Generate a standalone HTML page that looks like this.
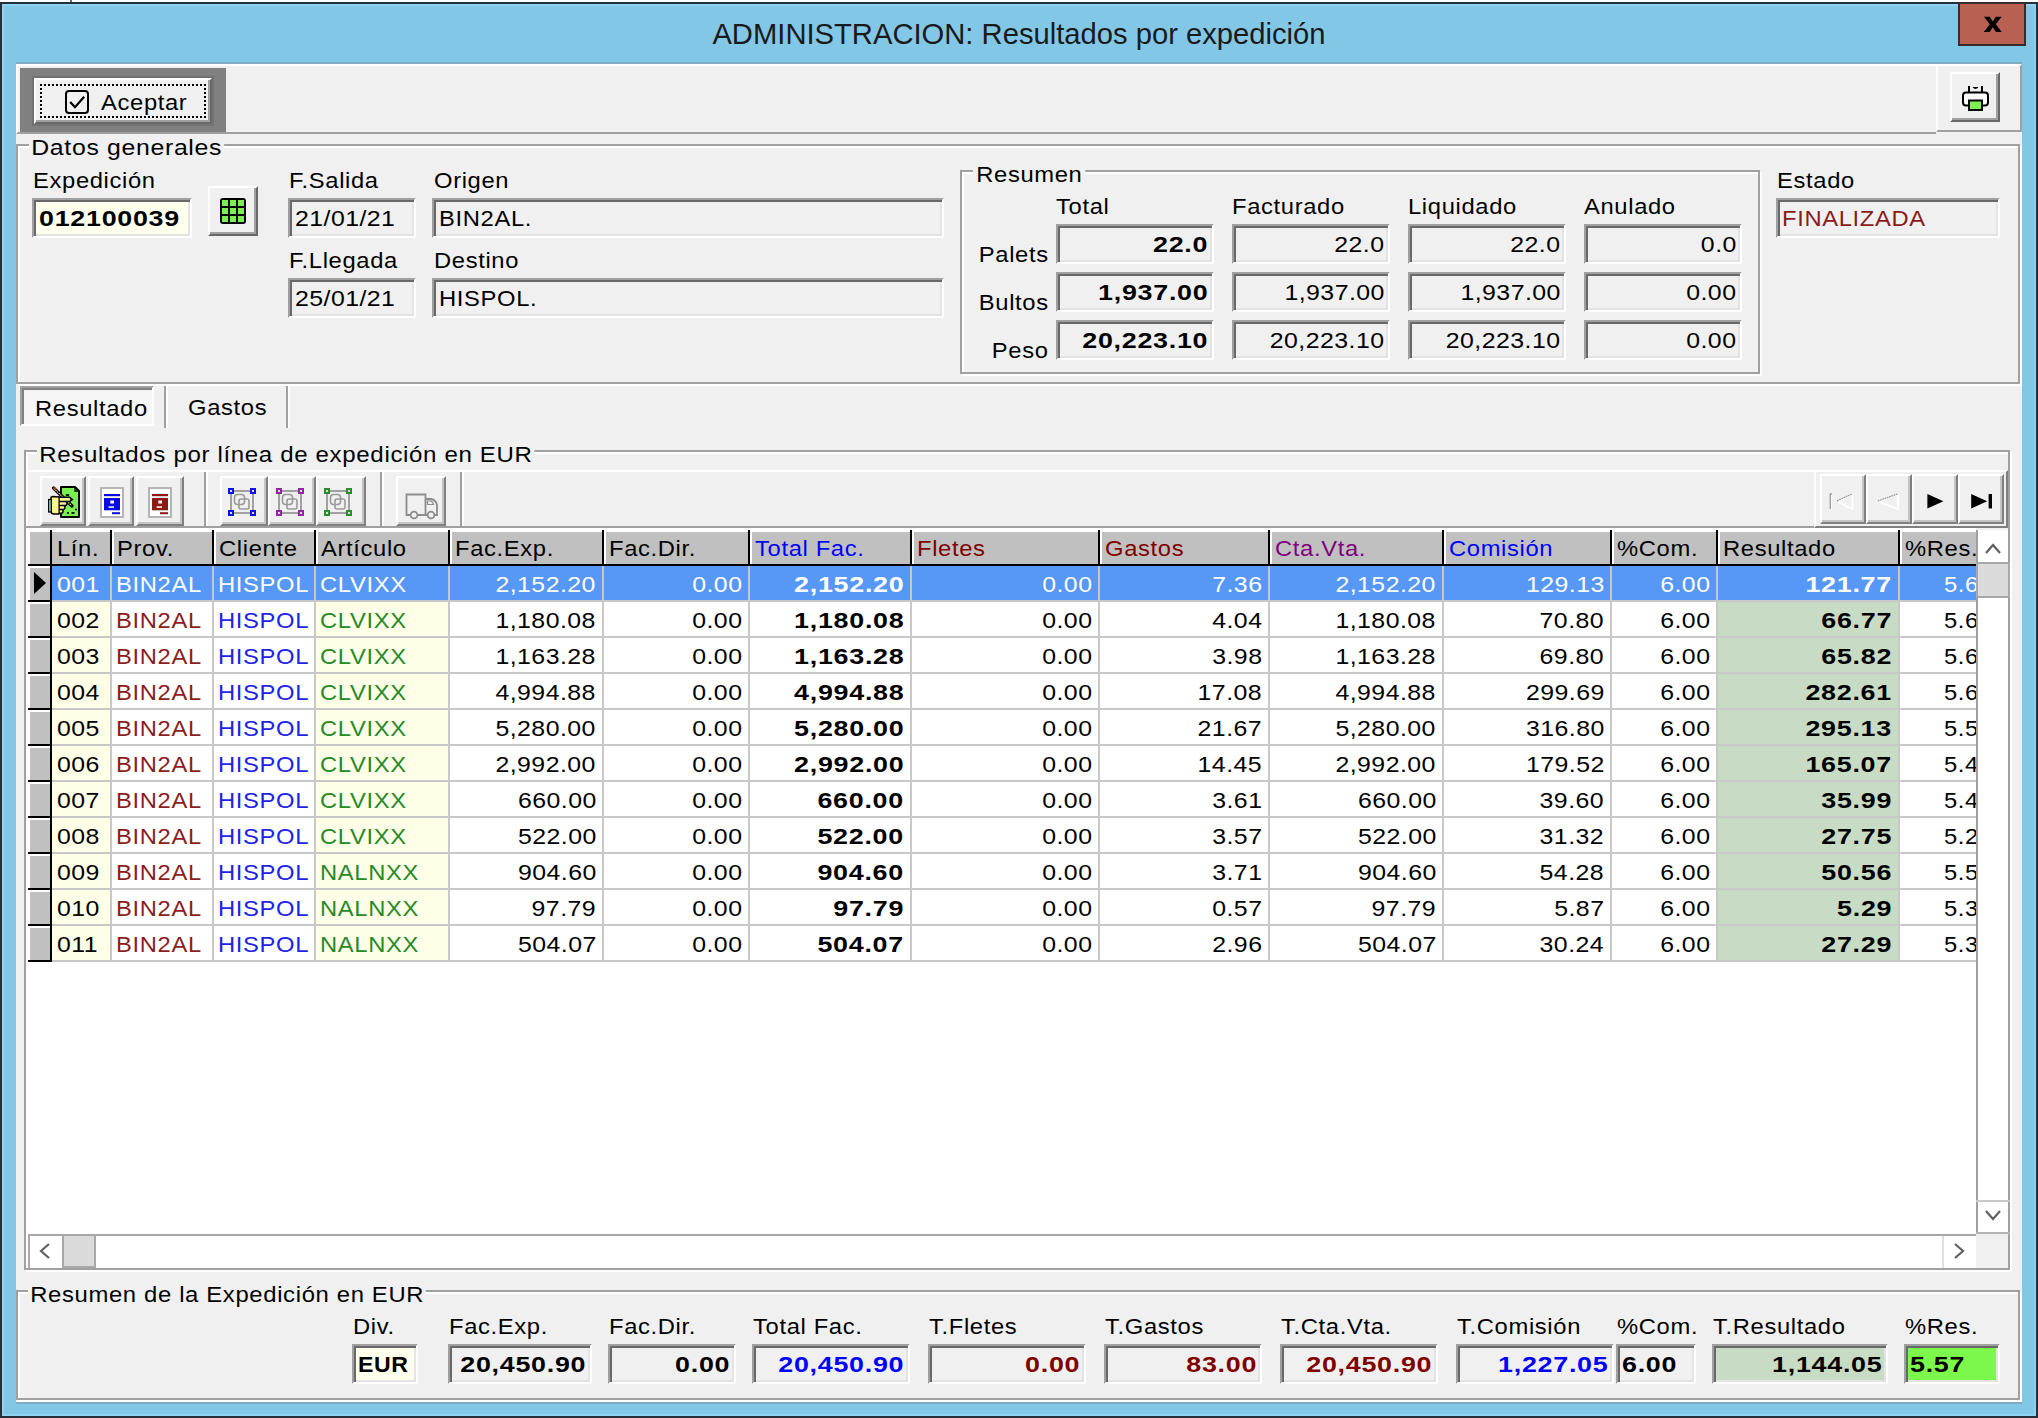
<!DOCTYPE html><html><head><meta charset="utf-8"><style>
*{margin:0;padding:0;box-sizing:content-box}
html{zoom:2}
body{width:1019px;height:709px;position:relative;overflow:hidden;background:#fff}
body div{position:absolute}
.t{font-family:"Liberation Sans",sans-serif;font-size:11px;line-height:12px;letter-spacing:0.3px;white-space:nowrap;color:#000;transform:scaleX(1.08);transform-origin:0 0}
.b{font-family:"Liberation Sans",sans-serif;font-size:11px;line-height:12px;letter-spacing:0.3px;font-weight:bold;white-space:nowrap;color:#000;transform:scaleX(1.22);transform-origin:0 0}
.r{transform-origin:100% 0}
.sk{border-style:solid;border-width:1px;border-color:#A0A0A0 #FFFFFF #FFFFFF #A0A0A0;box-shadow:inset 1px 1px 0 #696969, inset -1px -1px 0 #E3E3E3}
.rs{border-style:solid;border-width:1px;border-color:#FFFFFF #696969 #696969 #FFFFFF;box-shadow:inset -1px -1px 0 #A0A0A0}
</style></head><body>
<div style="left:0px;top:1px;width:1019px;height:708px;background:#26303a"></div>
<div style="left:1px;top:2px;width:1017px;height:706px;background:#83C7E7;border:1px solid #8FD3F0;box-sizing:border-box"></div>
<div style="left:35px;top:0px;width:1px;height:1px;background:#666"></div>
<div style="left:0;top:8.4px;width:1019px;text-align:center;font-family:'Liberation Sans',sans-serif;font-size:14.6px;line-height:17px;color:#1a1a1a;white-space:nowrap">ADMINISTRACION: Resultados por expedición</div>
<div style="left:979px;top:1px;width:34px;height:22px;background:#B86052;border:1px solid #3a2b2a;box-sizing:border-box"></div>
<svg style="position:absolute;left:979px;top:1px" width="34" height="22" viewBox="0 0 34 22"><path d="M13 7.4 L15.9 7.4 L17.4 9.7 L18.9 7.4 L21.8 7.4 L18.9 11.1 L21.9 15 L19 15 L17.4 12.6 L15.8 15 L12.9 15 L15.9 11.1 Z" fill="#000"/></svg>
<div style="left:8px;top:31px;width:1003px;height:1px;background:#80A9C6"></div>
<div style="left:8px;top:701px;width:1003px;height:1px;background:#80A9C6"></div>
<div style="left:8px;top:32px;width:1003px;height:669px;background:#F0F0F0"></div>
<div style="left:8px;top:32px;width:960px;height:35px;border-top:1px solid #fff;border-left:1px solid #fff;border-bottom:1px solid #A0A0A0;box-sizing:border-box"></div>
<div style="left:968px;top:32px;width:43px;height:34px;border-top:1px solid #fff;border-left:1px solid #fff;border-right:1px solid #A0A0A0;border-bottom:1px solid #A0A0A0;box-sizing:border-box"></div>
<div style="left:10px;top:34px;width:103px;height:32px;background:#808080"></div>
<div style="left:16px;top:38px;width:91px;height:25px;background:#727272"></div>
<div class="rs" style="left:17px;top:39px;width:87px;height:21px;background:#F0F0F0"></div>
<div style="left:20px;top:42px;width:83px;height:17px;border:1px dotted #000;box-sizing:border-box"></div>
<div style="left:32.5px;top:45px;width:12px;height:12px;border:1px solid #000;border-radius:2px;box-sizing:border-box"></div>
<svg style="position:absolute;left:32.5px;top:45px" width="12" height="12" viewBox="0 0 12 12"><path d="M2.6 6 L5 8.6 L9.6 3.4" fill="none" stroke="#000" stroke-width="1.1"/></svg>
<div class="t" style="left:50.5px;top:45.60px;">Aceptar</div>
<div class="rs" style="left:975px;top:36px;width:23px;height:23px;background:#F0F0F0"></div>
<svg style="position:absolute;left:975px;top:36px" width="25" height="25" viewBox="0 0 50 50"><path d="M19 14 v7 M32 14 v7" stroke="#000" stroke-width="2"/>
<path d="M22.5 15 Q25.5 19 28.5 15 z" fill="#000"/>
<rect x="13" y="20.5" width="25" height="13" rx="3" fill="#fff" stroke="#000" stroke-width="2"/>
<rect x="19" y="28.5" width="13" height="9.5" fill="#7CF050" stroke="#000" stroke-width="2"/></svg>
<div style="left:9px;top:73px;width:1000px;height:118px;border:1px solid #fff"></div>
<div style="left:8px;top:72px;width:1000px;height:118px;border:1px solid #A0A0A0"></div>
<div class="t" style="left:14.5px;top:68.20px;background:#F0F0F0;padding:0 1px;transform:scaleX(1.128)">Datos generales</div>
<div class="t" style="left:16.5px;top:84.60px;">Expedición</div>
<div class="sk" style="left:16px;top:99px;width:78px;height:18px;background:#FFFFEE"></div>
<div class="b" style="left:19.5px;top:103.60px;">012100039</div>
<div class="rs" style="left:104px;top:93px;width:23px;height:23px;background:#F0F0F0"></div>
<svg style="position:absolute;left:104px;top:93px" width="25" height="25" viewBox="0 0 50 50"><rect x="12" y="12" width="26" height="26" rx="3" fill="#000"/><g fill="#77F050"><rect x="14" y="14" width="6" height="6"/><rect x="14" y="22" width="6" height="6"/><rect x="14" y="30" width="6" height="6"/><rect x="22" y="14" width="6" height="6"/><rect x="22" y="22" width="6" height="6"/><rect x="22" y="30" width="6" height="6"/><rect x="30" y="14" width="6" height="6"/><rect x="30" y="22" width="6" height="6"/><rect x="30" y="30" width="6" height="6"/></g></svg>
<div class="t" style="left:144.3px;top:84.60px;">F.Salida</div>
<div class="sk" style="left:144px;top:99px;width:62px;height:18px;background:#F0F0F0"></div>
<div class="t" style="left:147.5px;top:103.60px;;transform:scaleX(1.13);letter-spacing:0.2px">21/01/21</div>
<div class="t" style="left:216.8px;top:84.60px;">Origen</div>
<div class="sk" style="left:216px;top:99px;width:254px;height:18px;background:#F0F0F0"></div>
<div class="t" style="left:219.5px;top:103.60px;">BIN2AL.</div>
<div class="t" style="left:144.3px;top:124.60px;">F.Llegada</div>
<div class="sk" style="left:144px;top:139px;width:62px;height:18px;background:#F0F0F0"></div>
<div class="t" style="left:147.5px;top:143.60px;;transform:scaleX(1.13);letter-spacing:0.2px">25/01/21</div>
<div class="t" style="left:216.8px;top:124.60px;">Destino</div>
<div class="sk" style="left:216px;top:139px;width:254px;height:18px;background:#F0F0F0"></div>
<div class="t" style="left:219.5px;top:143.60px;">HISPOL.</div>
<div style="left:480px;top:85px;width:398px;height:100px;border:1px solid #A0A0A0;box-shadow:1px 1px 0 #fff, inset 1px 1px 0 #fff"></div>
<div class="t" style="left:486.6px;top:81.40px;background:#F0F0F0;padding:0 1.5px">Resumen</div>
<div class="t" style="left:528.2px;top:97.60px;">Total</div>
<div class="t" style="left:616.2px;top:97.60px;">Facturado</div>
<div class="t" style="left:704.2px;top:97.60px;">Liquidado</div>
<div class="t" style="left:792.2px;top:97.60px;">Anulado</div>
<div class="t r" style="right:494.70px;top:121.40px;">Palets</div>
<div class="sk" style="left:528px;top:112px;width:77px;height:18px;background:#F0F0F0"></div>
<div class="b r" style="right:414.70px;top:116.60px;">22.0</div>
<div class="sk" style="left:616px;top:112px;width:77px;height:18px;background:#F0F0F0"></div>
<div class="t r" style="right:326.70px;top:116.60px;;transform:scaleX(1.13);letter-spacing:0.2px">22.0</div>
<div class="sk" style="left:704px;top:112px;width:77px;height:18px;background:#F0F0F0"></div>
<div class="t r" style="right:238.70px;top:116.60px;;transform:scaleX(1.13);letter-spacing:0.2px">22.0</div>
<div class="sk" style="left:792px;top:112px;width:77px;height:18px;background:#F0F0F0"></div>
<div class="t r" style="right:150.70px;top:116.60px;;transform:scaleX(1.13);letter-spacing:0.2px">0.0</div>
<div class="t r" style="right:494.70px;top:145.40px;">Bultos</div>
<div class="sk" style="left:528px;top:136px;width:77px;height:18px;background:#F0F0F0"></div>
<div class="b r" style="right:414.70px;top:140.60px;">1,937.00</div>
<div class="sk" style="left:616px;top:136px;width:77px;height:18px;background:#F0F0F0"></div>
<div class="t r" style="right:326.70px;top:140.60px;;transform:scaleX(1.13);letter-spacing:0.2px">1,937.00</div>
<div class="sk" style="left:704px;top:136px;width:77px;height:18px;background:#F0F0F0"></div>
<div class="t r" style="right:238.70px;top:140.60px;;transform:scaleX(1.13);letter-spacing:0.2px">1,937.00</div>
<div class="sk" style="left:792px;top:136px;width:77px;height:18px;background:#F0F0F0"></div>
<div class="t r" style="right:150.70px;top:140.60px;;transform:scaleX(1.13);letter-spacing:0.2px">0.00</div>
<div class="t r" style="right:494.70px;top:169.40px;">Peso</div>
<div class="sk" style="left:528px;top:160px;width:77px;height:18px;background:#F0F0F0"></div>
<div class="b r" style="right:414.70px;top:164.60px;">20,223.10</div>
<div class="sk" style="left:616px;top:160px;width:77px;height:18px;background:#F0F0F0"></div>
<div class="t r" style="right:326.70px;top:164.60px;;transform:scaleX(1.13);letter-spacing:0.2px">20,223.10</div>
<div class="sk" style="left:704px;top:160px;width:77px;height:18px;background:#F0F0F0"></div>
<div class="t r" style="right:238.70px;top:164.60px;;transform:scaleX(1.13);letter-spacing:0.2px">20,223.10</div>
<div class="sk" style="left:792px;top:160px;width:77px;height:18px;background:#F0F0F0"></div>
<div class="t r" style="right:150.70px;top:164.60px;;transform:scaleX(1.13);letter-spacing:0.2px">0.00</div>
<div class="t" style="left:888.3px;top:84.60px;">Estado</div>
<div class="sk" style="left:888px;top:99px;width:110px;height:18px;background:#F0F0F0"></div>
<div class="t" style="left:891px;top:103.60px;color:#8B1A1A">FINALIZADA</div>
<div style="left:10px;top:193px;width:67px;height:20px;border-style:solid;border-width:1px;border-color:#A0A0A0 #fff #fff #A0A0A0;box-shadow:inset 1px 1px 0 #808080;box-sizing:border-box;background:#F6F6F6"></div>
<div class="t" style="left:17.6px;top:198.40px;">Resultado</div>
<div style="left:82px;top:193px;width:1px;height:21px;background:#A0A0A0"></div>
<div style="left:83px;top:193px;width:1px;height:21px;background:#fff"></div>
<div class="t" style="left:94.2px;top:197.80px;">Gastos</div>
<div style="left:143px;top:193px;width:1px;height:21px;background:#A0A0A0"></div>
<div style="left:144px;top:193px;width:1px;height:21px;background:#fff"></div>
<div style="left:13px;top:226px;width:991px;height:408px;border:1px solid #fff"></div>
<div style="left:12px;top:225px;width:991px;height:408px;border:1px solid #A0A0A0"></div>
<div class="t" style="left:18.3px;top:221.40px;background:#F0F0F0;padding:0 1px;transform:scaleX(1.093)">Resultados por línea de expedición en EUR</div>
<div style="left:13px;top:235px;width:975px;height:29px;border-top:1px solid #fff;border-bottom:1px solid #A0A0A0;box-sizing:border-box"></div>
<div style="left:20px;top:238px;width:23px;height:25px;border-style:solid;border-width:1px;border-color:#fff #808080 #808080 #fff;box-sizing:border-box;box-shadow:inset -1px -1px 0 #C4C4C4"></div>
<div style="left:44px;top:238px;width:23px;height:25px;border-style:solid;border-width:1px;border-color:#fff #808080 #808080 #fff;box-sizing:border-box;box-shadow:inset -1px -1px 0 #C4C4C4"></div>
<div style="left:68px;top:238px;width:24px;height:25px;border-style:solid;border-width:1px;border-color:#fff #808080 #808080 #fff;box-sizing:border-box;box-shadow:inset -1px -1px 0 #C4C4C4"></div>
<div style="left:110px;top:238px;width:24px;height:25px;border-style:solid;border-width:1px;border-color:#fff #808080 #808080 #fff;box-sizing:border-box;box-shadow:inset -1px -1px 0 #C4C4C4"></div>
<div style="left:134px;top:238px;width:24px;height:25px;border-style:solid;border-width:1px;border-color:#fff #808080 #808080 #fff;box-sizing:border-box;box-shadow:inset -1px -1px 0 #C4C4C4"></div>
<div style="left:158px;top:238px;width:25px;height:25px;border-style:solid;border-width:1px;border-color:#fff #808080 #808080 #fff;box-sizing:border-box;box-shadow:inset -1px -1px 0 #C4C4C4"></div>
<div style="left:198px;top:238px;width:25px;height:25px;border-style:solid;border-width:1px;border-color:#fff #808080 #808080 #fff;box-sizing:border-box;box-shadow:inset -1px -1px 0 #C4C4C4"></div>
<div style="left:102px;top:236px;width:1px;height:27px;background:#A0A0A0"></div>
<div style="left:103px;top:236px;width:1px;height:27px;background:#fff"></div>
<div style="left:190px;top:236px;width:1px;height:27px;background:#A0A0A0"></div>
<div style="left:191px;top:236px;width:1px;height:27px;background:#fff"></div>
<div style="left:230px;top:236px;width:1px;height:27px;background:#A0A0A0"></div>
<div style="left:231px;top:236px;width:1px;height:27px;background:#fff"></div>
<svg style="position:absolute;left:24px;top:243px" width="16" height="16" viewBox="0 0 32 32">
<path d="M13 1 H27 L31 5 V31 H13 Z" fill="#77F050" stroke="#000" stroke-width="2" stroke-linejoin="round"/>
<path d="M27 1.5 V5 H30.5" fill="none" stroke="#000" stroke-width="1.3"/>
<g fill="#000"><ellipse cx="19.5" cy="9" rx="2" ry="1"/><ellipse cx="23.5" cy="13.5" rx="2" ry="1"/><ellipse cx="28" cy="23.5" rx="1" ry="1"/><ellipse cx="20" cy="27" rx="1.1" ry="1"/><ellipse cx="25" cy="27" rx="1.8" ry="1"/></g>
<path d="M5.5 2 L24 20" stroke="#000" stroke-width="3.2" stroke-linecap="round"/>
<path d="M6 2.5 L23.5 19.5" stroke="#F8E860" stroke-width="1.2" stroke-dasharray="1.4 0.8"/>
<circle cx="6.5" cy="2.6" r="1.5" fill="#C83020"/>
<g fill="#FFF490" stroke="#000" stroke-width="1.5" stroke-linejoin="round">
<rect x="9" y="23" width="6" height="4.2" rx="2"/>
<rect x="9" y="19.2" width="8" height="4.2" rx="2"/>
<rect x="9" y="15.2" width="10" height="4.2" rx="2"/>
<rect x="9" y="11.2" width="14" height="4.2" rx="2"/>
<path d="M3 12 Q3 10.5 5 10.5 L11 11 V28 H6 Q3 28 3 25 Z"/>
</g>
<path d="M9.5 12 V27" stroke="#FFF490" stroke-width="1.6"/>
<rect x="0.6" y="13.5" width="2.6" height="12.5" fill="#90E4F4" stroke="#000" stroke-width="1.2"/>
</svg>
<svg style="position:absolute;left:50px;top:243px" width="12" height="16" viewBox="0 0 24 32"><rect x="1" y="2" width="22" height="29" fill="#fff" stroke="#B4B4B4" stroke-width="2"/>
<rect x="4" y="8" width="16" height="2.2" fill="#0A0AE6"/>
<rect x="4" y="12" width="16" height="12.3" fill="#0A0AE6"/>
<rect x="10.3" y="14.5" width="3.7" height="3" fill="#fff"/>
<rect x="8.6" y="20.3" width="5.4" height="1.5" fill="#fff"/>
<rect x="12" y="26.2" width="8" height="2" fill="#0A0AE6"/></svg>
<svg style="position:absolute;left:74px;top:243px" width="12" height="16" viewBox="0 0 24 32"><rect x="1" y="2" width="22" height="29" fill="#fff" stroke="#B4B4B4" stroke-width="2"/>
<rect x="4" y="8" width="16" height="2.2" fill="#8B1A12"/>
<rect x="4" y="12" width="16" height="12.3" fill="#8B1A12"/>
<rect x="10.3" y="14.5" width="3.7" height="3" fill="#fff"/>
<rect x="8.6" y="20.3" width="5.4" height="1.5" fill="#fff"/>
<rect x="12" y="26.2" width="8" height="2" fill="#8B1A12"/></svg>
<svg style="position:absolute;left:114px;top:244px" width="14" height="14" viewBox="0 0 28 28"><rect x="3" y="3" width="22" height="22" fill="none" stroke="#8C8C8C" stroke-width="1.6"/>
<rect x="6.5" y="6.5" width="10" height="10" rx="3" fill="none" stroke="#9A9A9A" stroke-width="1.6"/>
<rect x="11" y="11" width="10" height="10" rx="2" fill="none" stroke="#9A9A9A" stroke-width="1.6"/><rect x="0" y="0" width="6" height="6" fill="#1010E8"/><rect x="2" y="2" width="2" height="2" fill="#ddd"/><rect x="0" y="22" width="6" height="6" fill="#1010E8"/><rect x="2" y="24" width="2" height="2" fill="#ddd"/><rect x="22" y="0" width="6" height="6" fill="#1010E8"/><rect x="24" y="2" width="2" height="2" fill="#ddd"/><rect x="22" y="22" width="6" height="6" fill="#1010E8"/><rect x="24" y="24" width="2" height="2" fill="#ddd"/></svg>
<svg style="position:absolute;left:138px;top:244px" width="14" height="14" viewBox="0 0 28 28"><rect x="3" y="3" width="22" height="22" fill="none" stroke="#8C8C8C" stroke-width="1.6"/>
<rect x="6.5" y="6.5" width="10" height="10" rx="3" fill="none" stroke="#9A9A9A" stroke-width="1.6"/>
<rect x="11" y="11" width="10" height="10" rx="2" fill="none" stroke="#9A9A9A" stroke-width="1.6"/><rect x="0" y="0" width="6" height="6" fill="#8E2A9E"/><rect x="2" y="2" width="2" height="2" fill="#ddd"/><rect x="0" y="22" width="6" height="6" fill="#8E2A9E"/><rect x="2" y="24" width="2" height="2" fill="#ddd"/><rect x="22" y="0" width="6" height="6" fill="#8E2A9E"/><rect x="24" y="2" width="2" height="2" fill="#ddd"/><rect x="22" y="22" width="6" height="6" fill="#8E2A9E"/><rect x="24" y="24" width="2" height="2" fill="#ddd"/></svg>
<svg style="position:absolute;left:162px;top:244px" width="14" height="14" viewBox="0 0 28 28"><rect x="3" y="3" width="22" height="22" fill="none" stroke="#8C8C8C" stroke-width="1.6"/>
<rect x="6.5" y="6.5" width="10" height="10" rx="3" fill="none" stroke="#9A9A9A" stroke-width="1.6"/>
<rect x="11" y="11" width="10" height="10" rx="2" fill="none" stroke="#9A9A9A" stroke-width="1.6"/><rect x="0" y="0" width="6" height="6" fill="#2E8C2E"/><rect x="2" y="2" width="2" height="2" fill="#ddd"/><rect x="0" y="22" width="6" height="6" fill="#2E8C2E"/><rect x="2" y="24" width="2" height="2" fill="#ddd"/><rect x="22" y="0" width="6" height="6" fill="#2E8C2E"/><rect x="24" y="2" width="2" height="2" fill="#ddd"/><rect x="22" y="22" width="6" height="6" fill="#2E8C2E"/><rect x="24" y="24" width="2" height="2" fill="#ddd"/></svg>
<svg style="position:absolute;left:200px;top:244px" width="20" height="16" viewBox="0 0 40 32"><path d="M6.5 6.5 H25.5 V27 H6.5 Z" fill="none" stroke="#8C8C8C" stroke-width="1.8"/>
<path d="M25.5 11 H31 Q36 12 37 17 V27 H25.5" fill="none" stroke="#8C8C8C" stroke-width="1.8"/>
<path d="M27.5 13 H31 Q33 14 33.5 16.5 H27.5 Z" fill="none" stroke="#8C8C8C" stroke-width="1.2"/>
<circle cx="14" cy="27" r="3.4" fill="#F0F0F0" stroke="#8C8C8C" stroke-width="1.8"/>
<circle cx="31" cy="27" r="3.4" fill="#F0F0F0" stroke="#8C8C8C" stroke-width="1.8"/></svg>
<div style="left:907px;top:235px;width:97px;height:29px;border-style:solid;border-width:1px;border-color:#fff #808080 #808080 #fff;box-sizing:border-box;background:#F0F0F0"></div>
<div style="left:910px;top:237px;width:23px;height:25px;border-style:solid;border-width:1px;border-color:#fff #808080 #808080 #fff;box-sizing:border-box;box-shadow:inset -1px -1px 0 #C4C4C4"></div>
<div style="left:933px;top:237px;width:23px;height:25px;border-style:solid;border-width:1px;border-color:#fff #808080 #808080 #fff;box-sizing:border-box;box-shadow:inset -1px -1px 0 #C4C4C4"></div>
<div style="left:956px;top:237px;width:23px;height:25px;border-style:solid;border-width:1px;border-color:#fff #808080 #808080 #fff;box-sizing:border-box;box-shadow:inset -1px -1px 0 #C4C4C4"></div>
<div style="left:979px;top:237px;width:23px;height:25px;border-style:solid;border-width:1px;border-color:#fff #808080 #808080 #fff;box-sizing:border-box;box-shadow:inset -1px -1px 0 #C4C4C4"></div>
<svg style="position:absolute;left:910px;top:237px" width="23" height="25" viewBox="0 0 46 50"><path d="M10.9 35.5 V20.5 H12.8" fill="none" stroke="#fff" stroke-width="1.6"/>
<path d="M10.3 35 V20 H12.2" fill="none" stroke="#A0A0A0" stroke-width="1.4"/>
<path d="M17.5 27.5 L32.5 20.5 V35 Z" fill="none" stroke="#fff" stroke-width="1.8"/>
<path d="M17 27 L32 20" fill="none" stroke="#A0A0A0" stroke-width="1.4" stroke-dasharray="1.8 0.6"/></svg>
<svg style="position:absolute;left:933px;top:237px" width="23" height="25" viewBox="0 0 46 50"><path d="M12.3 27.5 L32 20.5 V35 Z" fill="none" stroke="#fff" stroke-width="1.8"/>
<path d="M11.8 27 L31.5 20" fill="none" stroke="#A0A0A0" stroke-width="1.4" stroke-dasharray="1.8 0.6"/></svg>
<svg style="position:absolute;left:956px;top:237px" width="23" height="25" viewBox="0 0 46 50"><path d="M15.4 20 L31.4 27.2 L15.4 34.4 Z" fill="#000"/></svg>
<svg style="position:absolute;left:979px;top:237px" width="23" height="25" viewBox="0 0 46 50"><path d="M13.2 20 L29.2 27.2 L13.2 34.4 Z" fill="#000"/><rect x="30.6" y="20" width="3.4" height="14.4" fill="#000"/></svg>
<div style="left:14px;top:264px;width:974px;height:353px;background:#fff"></div>
<div style="left:14px;top:265px;width:974px;height:17px;background:#C0C0C0;border-top:1px solid #fff;box-sizing:border-box"></div>
<div style="left:14px;top:282px;width:974px;height:1px;background:#000"></div>
<div style="left:14px;top:265px;width:1px;height:17px;background:#fff"></div>
<div style="left:26px;top:283px;width:962px;height:17px;background:#5797F5"></div>
<div style="left:26px;top:300px;width:962px;height:1px;background:#C8C8C8"></div>
<div style="left:14px;top:283px;width:11px;height:17px;background:#C0C0C0;border-top:1px solid #fff;border-left:1px solid #fff;box-sizing:border-box"></div>
<div style="left:14px;top:300px;width:11px;height:1px;background:#000"></div>
<div style="left:26px;top:301px;width:29px;height:17px;background:#FFFFE8"></div>
<div style="left:158px;top:301px;width:66px;height:17px;background:#FFFFE8"></div>
<div style="left:859px;top:301px;width:90px;height:17px;background:#C8DBC4"></div>
<div style="left:26px;top:318px;width:962px;height:1px;background:#C8C8C8"></div>
<div style="left:14px;top:301px;width:11px;height:17px;background:#C0C0C0;border-top:1px solid #fff;border-left:1px solid #fff;box-sizing:border-box"></div>
<div style="left:14px;top:318px;width:11px;height:1px;background:#000"></div>
<div style="left:26px;top:319px;width:29px;height:17px;background:#FFFFE8"></div>
<div style="left:158px;top:319px;width:66px;height:17px;background:#FFFFE8"></div>
<div style="left:859px;top:319px;width:90px;height:17px;background:#C8DBC4"></div>
<div style="left:26px;top:336px;width:962px;height:1px;background:#C8C8C8"></div>
<div style="left:14px;top:319px;width:11px;height:17px;background:#C0C0C0;border-top:1px solid #fff;border-left:1px solid #fff;box-sizing:border-box"></div>
<div style="left:14px;top:336px;width:11px;height:1px;background:#000"></div>
<div style="left:26px;top:337px;width:29px;height:17px;background:#FFFFE8"></div>
<div style="left:158px;top:337px;width:66px;height:17px;background:#FFFFE8"></div>
<div style="left:859px;top:337px;width:90px;height:17px;background:#C8DBC4"></div>
<div style="left:26px;top:354px;width:962px;height:1px;background:#C8C8C8"></div>
<div style="left:14px;top:337px;width:11px;height:17px;background:#C0C0C0;border-top:1px solid #fff;border-left:1px solid #fff;box-sizing:border-box"></div>
<div style="left:14px;top:354px;width:11px;height:1px;background:#000"></div>
<div style="left:26px;top:355px;width:29px;height:17px;background:#FFFFE8"></div>
<div style="left:158px;top:355px;width:66px;height:17px;background:#FFFFE8"></div>
<div style="left:859px;top:355px;width:90px;height:17px;background:#C8DBC4"></div>
<div style="left:26px;top:372px;width:962px;height:1px;background:#C8C8C8"></div>
<div style="left:14px;top:355px;width:11px;height:17px;background:#C0C0C0;border-top:1px solid #fff;border-left:1px solid #fff;box-sizing:border-box"></div>
<div style="left:14px;top:372px;width:11px;height:1px;background:#000"></div>
<div style="left:26px;top:373px;width:29px;height:17px;background:#FFFFE8"></div>
<div style="left:158px;top:373px;width:66px;height:17px;background:#FFFFE8"></div>
<div style="left:859px;top:373px;width:90px;height:17px;background:#C8DBC4"></div>
<div style="left:26px;top:390px;width:962px;height:1px;background:#C8C8C8"></div>
<div style="left:14px;top:373px;width:11px;height:17px;background:#C0C0C0;border-top:1px solid #fff;border-left:1px solid #fff;box-sizing:border-box"></div>
<div style="left:14px;top:390px;width:11px;height:1px;background:#000"></div>
<div style="left:26px;top:391px;width:29px;height:17px;background:#FFFFE8"></div>
<div style="left:158px;top:391px;width:66px;height:17px;background:#FFFFE8"></div>
<div style="left:859px;top:391px;width:90px;height:17px;background:#C8DBC4"></div>
<div style="left:26px;top:408px;width:962px;height:1px;background:#C8C8C8"></div>
<div style="left:14px;top:391px;width:11px;height:17px;background:#C0C0C0;border-top:1px solid #fff;border-left:1px solid #fff;box-sizing:border-box"></div>
<div style="left:14px;top:408px;width:11px;height:1px;background:#000"></div>
<div style="left:26px;top:409px;width:29px;height:17px;background:#FFFFE8"></div>
<div style="left:158px;top:409px;width:66px;height:17px;background:#FFFFE8"></div>
<div style="left:859px;top:409px;width:90px;height:17px;background:#C8DBC4"></div>
<div style="left:26px;top:426px;width:962px;height:1px;background:#C8C8C8"></div>
<div style="left:14px;top:409px;width:11px;height:17px;background:#C0C0C0;border-top:1px solid #fff;border-left:1px solid #fff;box-sizing:border-box"></div>
<div style="left:14px;top:426px;width:11px;height:1px;background:#000"></div>
<div style="left:26px;top:427px;width:29px;height:17px;background:#FFFFE8"></div>
<div style="left:158px;top:427px;width:66px;height:17px;background:#FFFFE8"></div>
<div style="left:859px;top:427px;width:90px;height:17px;background:#C8DBC4"></div>
<div style="left:26px;top:444px;width:962px;height:1px;background:#C8C8C8"></div>
<div style="left:14px;top:427px;width:11px;height:17px;background:#C0C0C0;border-top:1px solid #fff;border-left:1px solid #fff;box-sizing:border-box"></div>
<div style="left:14px;top:444px;width:11px;height:1px;background:#000"></div>
<div style="left:26px;top:445px;width:29px;height:17px;background:#FFFFE8"></div>
<div style="left:158px;top:445px;width:66px;height:17px;background:#FFFFE8"></div>
<div style="left:859px;top:445px;width:90px;height:17px;background:#C8DBC4"></div>
<div style="left:26px;top:462px;width:962px;height:1px;background:#C8C8C8"></div>
<div style="left:14px;top:445px;width:11px;height:17px;background:#C0C0C0;border-top:1px solid #fff;border-left:1px solid #fff;box-sizing:border-box"></div>
<div style="left:14px;top:462px;width:11px;height:1px;background:#000"></div>
<div style="left:26px;top:463px;width:29px;height:17px;background:#FFFFE8"></div>
<div style="left:158px;top:463px;width:66px;height:17px;background:#FFFFE8"></div>
<div style="left:859px;top:463px;width:90px;height:17px;background:#C8DBC4"></div>
<div style="left:26px;top:480px;width:962px;height:1px;background:#C8C8C8"></div>
<div style="left:14px;top:463px;width:11px;height:17px;background:#C0C0C0;border-top:1px solid #fff;border-left:1px solid #fff;box-sizing:border-box"></div>
<div style="left:14px;top:480px;width:11px;height:1px;background:#000"></div>
<div style="left:25px;top:265px;width:1px;height:216px;background:#000"></div>
<div style="left:55px;top:265px;width:1px;height:17px;background:#000"></div>
<div style="left:56px;top:266px;width:1px;height:16px;background:#fff"></div>
<div style="left:55px;top:283px;width:1px;height:198px;background:#C8C8C8"></div>
<div style="left:106px;top:265px;width:1px;height:17px;background:#000"></div>
<div style="left:107px;top:266px;width:1px;height:16px;background:#fff"></div>
<div style="left:106px;top:283px;width:1px;height:198px;background:#C8C8C8"></div>
<div style="left:157px;top:265px;width:1px;height:17px;background:#000"></div>
<div style="left:158px;top:266px;width:1px;height:16px;background:#fff"></div>
<div style="left:157px;top:283px;width:1px;height:198px;background:#C8C8C8"></div>
<div style="left:224px;top:265px;width:1px;height:17px;background:#000"></div>
<div style="left:225px;top:266px;width:1px;height:16px;background:#fff"></div>
<div style="left:224px;top:283px;width:1px;height:198px;background:#C8C8C8"></div>
<div style="left:301px;top:265px;width:1px;height:17px;background:#000"></div>
<div style="left:302px;top:266px;width:1px;height:16px;background:#fff"></div>
<div style="left:301px;top:283px;width:1px;height:198px;background:#C8C8C8"></div>
<div style="left:374px;top:265px;width:1px;height:17px;background:#000"></div>
<div style="left:375px;top:266px;width:1px;height:16px;background:#fff"></div>
<div style="left:374px;top:283px;width:1px;height:198px;background:#C8C8C8"></div>
<div style="left:455px;top:265px;width:1px;height:17px;background:#000"></div>
<div style="left:456px;top:266px;width:1px;height:16px;background:#fff"></div>
<div style="left:455px;top:283px;width:1px;height:198px;background:#C8C8C8"></div>
<div style="left:549px;top:265px;width:1px;height:17px;background:#000"></div>
<div style="left:550px;top:266px;width:1px;height:16px;background:#fff"></div>
<div style="left:549px;top:283px;width:1px;height:198px;background:#C8C8C8"></div>
<div style="left:634px;top:265px;width:1px;height:17px;background:#000"></div>
<div style="left:635px;top:266px;width:1px;height:16px;background:#fff"></div>
<div style="left:634px;top:283px;width:1px;height:198px;background:#C8C8C8"></div>
<div style="left:721px;top:265px;width:1px;height:17px;background:#000"></div>
<div style="left:722px;top:266px;width:1px;height:16px;background:#fff"></div>
<div style="left:721px;top:283px;width:1px;height:198px;background:#C8C8C8"></div>
<div style="left:805px;top:265px;width:1px;height:17px;background:#000"></div>
<div style="left:806px;top:266px;width:1px;height:16px;background:#fff"></div>
<div style="left:805px;top:283px;width:1px;height:198px;background:#C8C8C8"></div>
<div style="left:858px;top:265px;width:1px;height:17px;background:#000"></div>
<div style="left:859px;top:266px;width:1px;height:16px;background:#fff"></div>
<div style="left:858px;top:283px;width:1px;height:198px;background:#C8C8C8"></div>
<div style="left:949px;top:265px;width:1px;height:17px;background:#000"></div>
<div style="left:950px;top:266px;width:1px;height:16px;background:#fff"></div>
<div style="left:949px;top:283px;width:1px;height:198px;background:#C8C8C8"></div>
<div class="t" style="left:28.3px;top:268.40px;color:#000">Lín.</div>
<div class="t" style="left:58.3px;top:268.40px;color:#000">Prov.</div>
<div class="t" style="left:109.3px;top:268.40px;color:#000">Cliente</div>
<div class="t" style="left:160.3px;top:268.40px;color:#000">Artículo</div>
<div class="t" style="left:227.3px;top:268.40px;color:#000">Fac.Exp.</div>
<div class="t" style="left:304.3px;top:268.40px;color:#000">Fac.Dir.</div>
<div class="t" style="left:377.3px;top:268.40px;color:#0000FF">Total Fac.</div>
<div class="t" style="left:458.3px;top:268.40px;color:#800000">Fletes</div>
<div class="t" style="left:552.3px;top:268.40px;color:#800000">Gastos</div>
<div class="t" style="left:637.3px;top:268.40px;color:#800080">Cta.Vta.</div>
<div class="t" style="left:724.3px;top:268.40px;color:#0000FF">Comisión</div>
<div class="t" style="left:808.3px;top:268.40px;color:#000">%Com.</div>
<div class="t" style="left:861.3px;top:268.40px;color:#000">Resultado</div>
<div class="t" style="left:952.3px;top:268.40px;color:#000">%Res.</div>
<svg style="position:absolute;left:16px;top:286px" width="8" height="11" viewBox="0 0 8 11"><path d="M1 0 L7 5.5 L1 11 Z" fill="#000"/></svg>
<div class="t" style="left:28.3px;top:286.60px;color:#fff;transform:scaleX(1.13);letter-spacing:0.2px">001</div>
<div class="t" style="left:58px;top:286.60px;color:#fff">BIN2AL</div>
<div class="t" style="left:109px;top:286.60px;color:#fff">HISPOL</div>
<div class="t" style="left:160px;top:286.60px;color:#fff">CLVIXX</div>
<div class="t r" style="right:720.90px;top:286.60px;color:#fff;transform:scaleX(1.13);letter-spacing:0.2px">2,152.20</div>
<div class="t r" style="right:647.90px;top:286.60px;color:#fff;transform:scaleX(1.13);letter-spacing:0.2px">0.00</div>
<div class="b r" style="right:566.90px;top:286.60px;color:#fff">2,152.20</div>
<div class="t r" style="right:472.90px;top:286.60px;color:#fff;transform:scaleX(1.13);letter-spacing:0.2px">0.00</div>
<div class="t r" style="right:387.90px;top:286.60px;color:#fff;transform:scaleX(1.13);letter-spacing:0.2px">7.36</div>
<div class="t r" style="right:300.90px;top:286.60px;color:#fff;transform:scaleX(1.13);letter-spacing:0.2px">2,152.20</div>
<div class="t r" style="right:216.90px;top:286.60px;color:#fff;transform:scaleX(1.13);letter-spacing:0.2px">129.13</div>
<div class="t r" style="right:163.90px;top:286.60px;color:#fff;transform:scaleX(1.13);letter-spacing:0.2px">6.00</div>
<div class="b r" style="right:72.90px;top:286.60px;color:#fff">121.77</div>
<div style="left:950px;top:286.60px;width:38px;height:14px;overflow:hidden"><div class="t" style="left:22.2px;top:0;color:#fff">5.66</div></div>
<div class="t" style="left:28.3px;top:304.60px;color:#000;transform:scaleX(1.13);letter-spacing:0.2px">002</div>
<div class="t" style="left:58px;top:304.60px;color:#8A1E1E">BIN2AL</div>
<div class="t" style="left:109px;top:304.60px;color:#2222E6">HISPOL</div>
<div class="t" style="left:160px;top:304.60px;color:#268A26">CLVIXX</div>
<div class="t r" style="right:720.90px;top:304.60px;color:#000;transform:scaleX(1.13);letter-spacing:0.2px">1,180.08</div>
<div class="t r" style="right:647.90px;top:304.60px;color:#000;transform:scaleX(1.13);letter-spacing:0.2px">0.00</div>
<div class="b r" style="right:566.90px;top:304.60px;color:#000">1,180.08</div>
<div class="t r" style="right:472.90px;top:304.60px;color:#000;transform:scaleX(1.13);letter-spacing:0.2px">0.00</div>
<div class="t r" style="right:387.90px;top:304.60px;color:#000;transform:scaleX(1.13);letter-spacing:0.2px">4.04</div>
<div class="t r" style="right:300.90px;top:304.60px;color:#000;transform:scaleX(1.13);letter-spacing:0.2px">1,180.08</div>
<div class="t r" style="right:216.90px;top:304.60px;color:#000;transform:scaleX(1.13);letter-spacing:0.2px">70.80</div>
<div class="t r" style="right:163.90px;top:304.60px;color:#000;transform:scaleX(1.13);letter-spacing:0.2px">6.00</div>
<div class="b r" style="right:72.90px;top:304.60px;color:#000">66.77</div>
<div style="left:950px;top:304.60px;width:38px;height:14px;overflow:hidden"><div class="t" style="left:22.2px;top:0;color:#000">5.66</div></div>
<div class="t" style="left:28.3px;top:322.60px;color:#000;transform:scaleX(1.13);letter-spacing:0.2px">003</div>
<div class="t" style="left:58px;top:322.60px;color:#8A1E1E">BIN2AL</div>
<div class="t" style="left:109px;top:322.60px;color:#2222E6">HISPOL</div>
<div class="t" style="left:160px;top:322.60px;color:#268A26">CLVIXX</div>
<div class="t r" style="right:720.90px;top:322.60px;color:#000;transform:scaleX(1.13);letter-spacing:0.2px">1,163.28</div>
<div class="t r" style="right:647.90px;top:322.60px;color:#000;transform:scaleX(1.13);letter-spacing:0.2px">0.00</div>
<div class="b r" style="right:566.90px;top:322.60px;color:#000">1,163.28</div>
<div class="t r" style="right:472.90px;top:322.60px;color:#000;transform:scaleX(1.13);letter-spacing:0.2px">0.00</div>
<div class="t r" style="right:387.90px;top:322.60px;color:#000;transform:scaleX(1.13);letter-spacing:0.2px">3.98</div>
<div class="t r" style="right:300.90px;top:322.60px;color:#000;transform:scaleX(1.13);letter-spacing:0.2px">1,163.28</div>
<div class="t r" style="right:216.90px;top:322.60px;color:#000;transform:scaleX(1.13);letter-spacing:0.2px">69.80</div>
<div class="t r" style="right:163.90px;top:322.60px;color:#000;transform:scaleX(1.13);letter-spacing:0.2px">6.00</div>
<div class="b r" style="right:72.90px;top:322.60px;color:#000">65.82</div>
<div style="left:950px;top:322.60px;width:38px;height:14px;overflow:hidden"><div class="t" style="left:22.2px;top:0;color:#000">5.66</div></div>
<div class="t" style="left:28.3px;top:340.60px;color:#000;transform:scaleX(1.13);letter-spacing:0.2px">004</div>
<div class="t" style="left:58px;top:340.60px;color:#8A1E1E">BIN2AL</div>
<div class="t" style="left:109px;top:340.60px;color:#2222E6">HISPOL</div>
<div class="t" style="left:160px;top:340.60px;color:#268A26">CLVIXX</div>
<div class="t r" style="right:720.90px;top:340.60px;color:#000;transform:scaleX(1.13);letter-spacing:0.2px">4,994.88</div>
<div class="t r" style="right:647.90px;top:340.60px;color:#000;transform:scaleX(1.13);letter-spacing:0.2px">0.00</div>
<div class="b r" style="right:566.90px;top:340.60px;color:#000">4,994.88</div>
<div class="t r" style="right:472.90px;top:340.60px;color:#000;transform:scaleX(1.13);letter-spacing:0.2px">0.00</div>
<div class="t r" style="right:387.90px;top:340.60px;color:#000;transform:scaleX(1.13);letter-spacing:0.2px">17.08</div>
<div class="t r" style="right:300.90px;top:340.60px;color:#000;transform:scaleX(1.13);letter-spacing:0.2px">4,994.88</div>
<div class="t r" style="right:216.90px;top:340.60px;color:#000;transform:scaleX(1.13);letter-spacing:0.2px">299.69</div>
<div class="t r" style="right:163.90px;top:340.60px;color:#000;transform:scaleX(1.13);letter-spacing:0.2px">6.00</div>
<div class="b r" style="right:72.90px;top:340.60px;color:#000">282.61</div>
<div style="left:950px;top:340.60px;width:38px;height:14px;overflow:hidden"><div class="t" style="left:22.2px;top:0;color:#000">5.66</div></div>
<div class="t" style="left:28.3px;top:358.60px;color:#000;transform:scaleX(1.13);letter-spacing:0.2px">005</div>
<div class="t" style="left:58px;top:358.60px;color:#8A1E1E">BIN2AL</div>
<div class="t" style="left:109px;top:358.60px;color:#2222E6">HISPOL</div>
<div class="t" style="left:160px;top:358.60px;color:#268A26">CLVIXX</div>
<div class="t r" style="right:720.90px;top:358.60px;color:#000;transform:scaleX(1.13);letter-spacing:0.2px">5,280.00</div>
<div class="t r" style="right:647.90px;top:358.60px;color:#000;transform:scaleX(1.13);letter-spacing:0.2px">0.00</div>
<div class="b r" style="right:566.90px;top:358.60px;color:#000">5,280.00</div>
<div class="t r" style="right:472.90px;top:358.60px;color:#000;transform:scaleX(1.13);letter-spacing:0.2px">0.00</div>
<div class="t r" style="right:387.90px;top:358.60px;color:#000;transform:scaleX(1.13);letter-spacing:0.2px">21.67</div>
<div class="t r" style="right:300.90px;top:358.60px;color:#000;transform:scaleX(1.13);letter-spacing:0.2px">5,280.00</div>
<div class="t r" style="right:216.90px;top:358.60px;color:#000;transform:scaleX(1.13);letter-spacing:0.2px">316.80</div>
<div class="t r" style="right:163.90px;top:358.60px;color:#000;transform:scaleX(1.13);letter-spacing:0.2px">6.00</div>
<div class="b r" style="right:72.90px;top:358.60px;color:#000">295.13</div>
<div style="left:950px;top:358.60px;width:38px;height:14px;overflow:hidden"><div class="t" style="left:22.2px;top:0;color:#000">5.59</div></div>
<div class="t" style="left:28.3px;top:376.60px;color:#000;transform:scaleX(1.13);letter-spacing:0.2px">006</div>
<div class="t" style="left:58px;top:376.60px;color:#8A1E1E">BIN2AL</div>
<div class="t" style="left:109px;top:376.60px;color:#2222E6">HISPOL</div>
<div class="t" style="left:160px;top:376.60px;color:#268A26">CLVIXX</div>
<div class="t r" style="right:720.90px;top:376.60px;color:#000;transform:scaleX(1.13);letter-spacing:0.2px">2,992.00</div>
<div class="t r" style="right:647.90px;top:376.60px;color:#000;transform:scaleX(1.13);letter-spacing:0.2px">0.00</div>
<div class="b r" style="right:566.90px;top:376.60px;color:#000">2,992.00</div>
<div class="t r" style="right:472.90px;top:376.60px;color:#000;transform:scaleX(1.13);letter-spacing:0.2px">0.00</div>
<div class="t r" style="right:387.90px;top:376.60px;color:#000;transform:scaleX(1.13);letter-spacing:0.2px">14.45</div>
<div class="t r" style="right:300.90px;top:376.60px;color:#000;transform:scaleX(1.13);letter-spacing:0.2px">2,992.00</div>
<div class="t r" style="right:216.90px;top:376.60px;color:#000;transform:scaleX(1.13);letter-spacing:0.2px">179.52</div>
<div class="t r" style="right:163.90px;top:376.60px;color:#000;transform:scaleX(1.13);letter-spacing:0.2px">6.00</div>
<div class="b r" style="right:72.90px;top:376.60px;color:#000">165.07</div>
<div style="left:950px;top:376.60px;width:38px;height:14px;overflow:hidden"><div class="t" style="left:22.2px;top:0;color:#000">5.48</div></div>
<div class="t" style="left:28.3px;top:394.60px;color:#000;transform:scaleX(1.13);letter-spacing:0.2px">007</div>
<div class="t" style="left:58px;top:394.60px;color:#8A1E1E">BIN2AL</div>
<div class="t" style="left:109px;top:394.60px;color:#2222E6">HISPOL</div>
<div class="t" style="left:160px;top:394.60px;color:#268A26">CLVIXX</div>
<div class="t r" style="right:720.90px;top:394.60px;color:#000;transform:scaleX(1.13);letter-spacing:0.2px">660.00</div>
<div class="t r" style="right:647.90px;top:394.60px;color:#000;transform:scaleX(1.13);letter-spacing:0.2px">0.00</div>
<div class="b r" style="right:566.90px;top:394.60px;color:#000">660.00</div>
<div class="t r" style="right:472.90px;top:394.60px;color:#000;transform:scaleX(1.13);letter-spacing:0.2px">0.00</div>
<div class="t r" style="right:387.90px;top:394.60px;color:#000;transform:scaleX(1.13);letter-spacing:0.2px">3.61</div>
<div class="t r" style="right:300.90px;top:394.60px;color:#000;transform:scaleX(1.13);letter-spacing:0.2px">660.00</div>
<div class="t r" style="right:216.90px;top:394.60px;color:#000;transform:scaleX(1.13);letter-spacing:0.2px">39.60</div>
<div class="t r" style="right:163.90px;top:394.60px;color:#000;transform:scaleX(1.13);letter-spacing:0.2px">6.00</div>
<div class="b r" style="right:72.90px;top:394.60px;color:#000">35.99</div>
<div style="left:950px;top:394.60px;width:38px;height:14px;overflow:hidden"><div class="t" style="left:22.2px;top:0;color:#000">5.45</div></div>
<div class="t" style="left:28.3px;top:412.60px;color:#000;transform:scaleX(1.13);letter-spacing:0.2px">008</div>
<div class="t" style="left:58px;top:412.60px;color:#8A1E1E">BIN2AL</div>
<div class="t" style="left:109px;top:412.60px;color:#2222E6">HISPOL</div>
<div class="t" style="left:160px;top:412.60px;color:#268A26">CLVIXX</div>
<div class="t r" style="right:720.90px;top:412.60px;color:#000;transform:scaleX(1.13);letter-spacing:0.2px">522.00</div>
<div class="t r" style="right:647.90px;top:412.60px;color:#000;transform:scaleX(1.13);letter-spacing:0.2px">0.00</div>
<div class="b r" style="right:566.90px;top:412.60px;color:#000">522.00</div>
<div class="t r" style="right:472.90px;top:412.60px;color:#000;transform:scaleX(1.13);letter-spacing:0.2px">0.00</div>
<div class="t r" style="right:387.90px;top:412.60px;color:#000;transform:scaleX(1.13);letter-spacing:0.2px">3.57</div>
<div class="t r" style="right:300.90px;top:412.60px;color:#000;transform:scaleX(1.13);letter-spacing:0.2px">522.00</div>
<div class="t r" style="right:216.90px;top:412.60px;color:#000;transform:scaleX(1.13);letter-spacing:0.2px">31.32</div>
<div class="t r" style="right:163.90px;top:412.60px;color:#000;transform:scaleX(1.13);letter-spacing:0.2px">6.00</div>
<div class="b r" style="right:72.90px;top:412.60px;color:#000">27.75</div>
<div style="left:950px;top:412.60px;width:38px;height:14px;overflow:hidden"><div class="t" style="left:22.2px;top:0;color:#000">5.25</div></div>
<div class="t" style="left:28.3px;top:430.60px;color:#000;transform:scaleX(1.13);letter-spacing:0.2px">009</div>
<div class="t" style="left:58px;top:430.60px;color:#8A1E1E">BIN2AL</div>
<div class="t" style="left:109px;top:430.60px;color:#2222E6">HISPOL</div>
<div class="t" style="left:160px;top:430.60px;color:#268A26">NALNXX</div>
<div class="t r" style="right:720.90px;top:430.60px;color:#000;transform:scaleX(1.13);letter-spacing:0.2px">904.60</div>
<div class="t r" style="right:647.90px;top:430.60px;color:#000;transform:scaleX(1.13);letter-spacing:0.2px">0.00</div>
<div class="b r" style="right:566.90px;top:430.60px;color:#000">904.60</div>
<div class="t r" style="right:472.90px;top:430.60px;color:#000;transform:scaleX(1.13);letter-spacing:0.2px">0.00</div>
<div class="t r" style="right:387.90px;top:430.60px;color:#000;transform:scaleX(1.13);letter-spacing:0.2px">3.71</div>
<div class="t r" style="right:300.90px;top:430.60px;color:#000;transform:scaleX(1.13);letter-spacing:0.2px">904.60</div>
<div class="t r" style="right:216.90px;top:430.60px;color:#000;transform:scaleX(1.13);letter-spacing:0.2px">54.28</div>
<div class="t r" style="right:163.90px;top:430.60px;color:#000;transform:scaleX(1.13);letter-spacing:0.2px">6.00</div>
<div class="b r" style="right:72.90px;top:430.60px;color:#000">50.56</div>
<div style="left:950px;top:430.60px;width:38px;height:14px;overflow:hidden"><div class="t" style="left:22.2px;top:0;color:#000">5.59</div></div>
<div class="t" style="left:28.3px;top:448.60px;color:#000;transform:scaleX(1.13);letter-spacing:0.2px">010</div>
<div class="t" style="left:58px;top:448.60px;color:#8A1E1E">BIN2AL</div>
<div class="t" style="left:109px;top:448.60px;color:#2222E6">HISPOL</div>
<div class="t" style="left:160px;top:448.60px;color:#268A26">NALNXX</div>
<div class="t r" style="right:720.90px;top:448.60px;color:#000;transform:scaleX(1.13);letter-spacing:0.2px">97.79</div>
<div class="t r" style="right:647.90px;top:448.60px;color:#000;transform:scaleX(1.13);letter-spacing:0.2px">0.00</div>
<div class="b r" style="right:566.90px;top:448.60px;color:#000">97.79</div>
<div class="t r" style="right:472.90px;top:448.60px;color:#000;transform:scaleX(1.13);letter-spacing:0.2px">0.00</div>
<div class="t r" style="right:387.90px;top:448.60px;color:#000;transform:scaleX(1.13);letter-spacing:0.2px">0.57</div>
<div class="t r" style="right:300.90px;top:448.60px;color:#000;transform:scaleX(1.13);letter-spacing:0.2px">97.79</div>
<div class="t r" style="right:216.90px;top:448.60px;color:#000;transform:scaleX(1.13);letter-spacing:0.2px">5.87</div>
<div class="t r" style="right:163.90px;top:448.60px;color:#000;transform:scaleX(1.13);letter-spacing:0.2px">6.00</div>
<div class="b r" style="right:72.90px;top:448.60px;color:#000">5.29</div>
<div style="left:950px;top:448.60px;width:38px;height:14px;overflow:hidden"><div class="t" style="left:22.2px;top:0;color:#000">5.35</div></div>
<div class="t" style="left:28.3px;top:466.60px;color:#000;transform:scaleX(1.13);letter-spacing:0.2px">011</div>
<div class="t" style="left:58px;top:466.60px;color:#8A1E1E">BIN2AL</div>
<div class="t" style="left:109px;top:466.60px;color:#2222E6">HISPOL</div>
<div class="t" style="left:160px;top:466.60px;color:#268A26">NALNXX</div>
<div class="t r" style="right:720.90px;top:466.60px;color:#000;transform:scaleX(1.13);letter-spacing:0.2px">504.07</div>
<div class="t r" style="right:647.90px;top:466.60px;color:#000;transform:scaleX(1.13);letter-spacing:0.2px">0.00</div>
<div class="b r" style="right:566.90px;top:466.60px;color:#000">504.07</div>
<div class="t r" style="right:472.90px;top:466.60px;color:#000;transform:scaleX(1.13);letter-spacing:0.2px">0.00</div>
<div class="t r" style="right:387.90px;top:466.60px;color:#000;transform:scaleX(1.13);letter-spacing:0.2px">2.96</div>
<div class="t r" style="right:300.90px;top:466.60px;color:#000;transform:scaleX(1.13);letter-spacing:0.2px">504.07</div>
<div class="t r" style="right:216.90px;top:466.60px;color:#000;transform:scaleX(1.13);letter-spacing:0.2px">30.24</div>
<div class="t r" style="right:163.90px;top:466.60px;color:#000;transform:scaleX(1.13);letter-spacing:0.2px">6.00</div>
<div class="b r" style="right:72.90px;top:466.60px;color:#000">27.29</div>
<div style="left:950px;top:466.60px;width:38px;height:14px;overflow:hidden"><div class="t" style="left:22.2px;top:0;color:#000">5.35</div></div>
<div style="left:988px;top:265px;width:17px;height:352px;background:#fff;border-left:1px solid #A0A0A0;border-right:1px solid #A0A0A0;box-sizing:border-box"></div>
<div style="left:988px;top:281px;width:17px;height:18px;background:#DADADA;border:1px solid #A8A8A8;box-sizing:border-box"></div>
<div style="left:988px;top:600px;width:17px;height:1px;background:#C8C8C8"></div>
<div style="left:988px;top:616px;width:17px;height:1px;background:#B4B4B4"></div>
<svg style="position:absolute;left:988px;top:265px" width="17" height="16" viewBox="0 0 17 16"><path d="M5 11.5 L8.5 7.5 L12 11.5" fill="none" stroke="#606060" stroke-width="1.1"/></svg>
<svg style="position:absolute;left:988px;top:600px" width="17" height="17" viewBox="0 0 17 17"><path d="M5 5.5 L8.5 9.5 L12 5.5" fill="none" stroke="#606060" stroke-width="1.1"/></svg>
<div style="left:14px;top:617px;width:974px;height:17px;background:#fff;border-top:1px solid #A8A8A8;border-left:1px solid #A8A8A8;box-sizing:border-box"></div>
<div style="left:31px;top:617px;width:17px;height:17px;background:#DADADA;border:1px solid #A8A8A8;box-sizing:border-box"></div>
<div style="left:971px;top:618px;width:1px;height:16px;background:#E0E0E0"></div>
<svg style="position:absolute;left:14px;top:617px" width="17" height="17" viewBox="0 0 17 17"><path d="M10.5 5 L6.5 8.5 L10.5 12" fill="none" stroke="#606060" stroke-width="1.1"/></svg>
<svg style="position:absolute;left:971px;top:617px" width="17" height="17" viewBox="0 0 17 17"><path d="M6.5 5 L10.5 8.5 L6.5 12" fill="none" stroke="#606060" stroke-width="1.1"/></svg>
<div style="left:988px;top:617px;width:17px;height:17px;background:#F0F0F0;border-right:1px solid #A0A0A0;box-sizing:border-box"></div>
<div style="left:9px;top:646px;width:1000px;height:53px;border:1px solid #fff"></div>
<div style="left:8px;top:645px;width:1000px;height:53px;border:1px solid #A0A0A0"></div>
<div class="t" style="left:14.1px;top:641.40px;background:#F0F0F0;padding:0 1px;transform:scaleX(1.084)">Resumen de la Expedición en EUR</div>
<div class="t" style="left:176.5px;top:657.40px;">Div.</div>
<div class="sk" style="left:176px;top:672px;width:31px;height:18px;background:#FFFFEE"></div>
<div class="b" style="left:179px;top:676.60px;color:#000;transform:scaleX(1.05)">EUR</div>
<div class="t" style="left:224.5px;top:657.40px;">Fac.Exp.</div>
<div class="sk" style="left:224px;top:672px;width:70px;height:18px;background:#F0F0F0"></div>
<div class="b r" style="right:725.70px;top:676.60px;color:#000">20,450.90</div>
<div class="t" style="left:304.5px;top:657.40px;">Fac.Dir.</div>
<div class="sk" style="left:304px;top:672px;width:62px;height:18px;background:#F0F0F0"></div>
<div class="b r" style="right:653.70px;top:676.60px;color:#000">0.00</div>
<div class="t" style="left:376.5px;top:657.40px;">Total Fac.</div>
<div class="sk" style="left:376px;top:672px;width:77px;height:18px;background:#F0F0F0"></div>
<div class="b r" style="right:566.70px;top:676.60px;color:#0000FF">20,450.90</div>
<div class="t" style="left:464.5px;top:657.40px;">T.Fletes</div>
<div class="sk" style="left:464px;top:672px;width:77px;height:18px;background:#F0F0F0"></div>
<div class="b r" style="right:478.70px;top:676.60px;color:#800000">0.00</div>
<div class="t" style="left:552.5px;top:657.40px;">T.Gastos</div>
<div class="sk" style="left:552px;top:672px;width:77px;height:18px;background:#F0F0F0"></div>
<div class="b r" style="right:390.70px;top:676.60px;color:#800000">83.00</div>
<div class="t" style="left:640.5px;top:657.40px;">T.Cta.Vta.</div>
<div class="sk" style="left:640px;top:672px;width:77px;height:18px;background:#F0F0F0"></div>
<div class="b r" style="right:302.70px;top:676.60px;color:#800000">20,450.90</div>
<div class="t" style="left:728.5px;top:657.40px;">T.Comisión</div>
<div class="sk" style="left:728px;top:672px;width:77px;height:18px;background:#F0F0F0"></div>
<div class="b r" style="right:214.70px;top:676.60px;color:#0000FF">1,227.05</div>
<div class="t" style="left:808.5px;top:657.40px;">%Com.</div>
<div class="sk" style="left:808px;top:672px;width:38px;height:18px;background:#F0F0F0"></div>
<div class="b" style="left:811px;top:676.60px;color:#000">6.00</div>
<div class="t" style="left:856.5px;top:657.40px;">T.Resultado</div>
<div class="sk" style="left:856px;top:672px;width:86px;height:18px;background:#C8DBC4"></div>
<div class="b r" style="right:77.70px;top:676.60px;color:#000">1,144.05</div>
<div class="t" style="left:952.5px;top:657.40px;">%Res.</div>
<div class="sk" style="left:952px;top:672px;width:46px;height:18px;background:#7CF84C"></div>
<div class="b" style="left:955px;top:676.60px;color:#000">5.57</div>
</body></html>
